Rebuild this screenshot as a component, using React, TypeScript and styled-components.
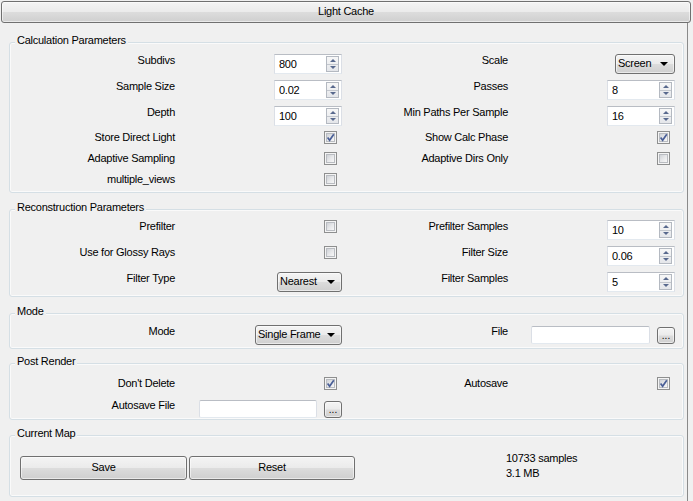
import React from 'react';
import styled, { createGlobalStyle, css } from 'styled-components';

const GlobalStyle = createGlobalStyle`
  html, body { margin: 0; padding: 0; background: #f0f0f0; }
  body {
    font-family: "Liberation Sans", Arial, sans-serif;
    font-size: 11px;
    letter-spacing: -0.25px;
    color: #000;
  }
  * { box-sizing: border-box; }
`;

const buttonFace = css`
  border: 1px solid #707070;
  border-radius: 3px;
  background: linear-gradient(to bottom, #f4f4f4 0%, #ebebeb 48%, #dcdcdc 52%, #cfcfcf 100%);
  box-shadow: inset 0 0 0 1px rgba(255, 255, 255, 0.55);
`;

const Window = styled.div`
  width: 693px;
  height: 501px;
  overflow: hidden;
  background: #f0f0f0;
  display: flex;
  flex-direction: column;
`;

const RolloutHeader = styled.div<{ $mt?: number }>`
  ${buttonFace};
  flex: none;
  width: 690px;
  height: 22px;
  margin: ${p => p.$mt ?? 1}px 2px 0 1px;
  display: flex;
  align-items: center;
  justify-content: center;
  padding-bottom: 1px;
  line-height: 13px;
`;

const Panel = styled.div`
  flex: none;
  width: 688px;
  padding: 0 3px 10px 9px;
  border-right: 1px solid #8a8a8a;
  display: flex;
  flex-direction: column;
`;

const GroupBox = styled.section<{ $mt: number; $pb: number }>`
  margin-top: ${p => p.$mt}px;
  padding: 0 8px ${p => p.$pb}px 0;
  border: 1px solid #d5dfe5;
  border-radius: 3px;
  box-shadow: inset 0 0 0 1px #fafafa;
`;

const GroupTitle = styled.div`
  width: fit-content;
  margin: -9px 0 0 5px;
  padding: 0 2px 1px;
  line-height: 13px;
  background: #f0f0f0;
`;

const FormRow = styled.div<{ $gap?: number }>`
  display: grid;
  grid-template-columns: 165px 167px 166px 167px;
  height: 21px;
  margin-top: ${p => p.$gap ?? 0}px;
  align-items: center;
`;

const Label = styled.div`
  text-align: right;
  white-space: nowrap;
  line-height: 13px;
  margin-bottom: 3px;
`;

const Cell = styled.div`
  display: flex;
  justify-content: flex-end;
  align-items: center;
  height: 100%;
  gap: 7px;
`;

const fieldBorder = css`
  background: #fff;
  border: 1px solid;
  border-color: #b9bdc4 #dbdfe6 #e3e9ef #dbdfe6;
`;

const SpinField = styled.div`
  ${fieldBorder};
  width: 68px;
  height: 20px;
  margin-top: 4px;
  display: flex;
  align-items: center;
`;

const SpinValue = styled.span`
  flex: 1;
  padding-left: 4px;
  line-height: 13px;
`;

const SpinButtons = styled.div`
  width: 13px;
  height: 16px;
  margin-right: 2px;
  border: 1px solid #b4b9c1;
  display: flex;
  flex-direction: column;
  background: linear-gradient(to bottom, #f7f7f7, #e4e6ea);
`;

const SpinHalf = styled.div<{ $down?: boolean }>`
  flex: 1;
  display: flex;
  align-items: center;
  justify-content: center;
  ${p => p.$down && css`border-top: 1px solid #c3c7ce;`}
`;

const Arrow = styled.span<{ $down?: boolean }>`
  width: 0;
  height: 0;
  border-left: 3px solid transparent;
  border-right: 3px solid transparent;
  ${p => p.$down
    ? css`border-top: 3px solid #58698d;`
    : css`border-bottom: 3px solid #58698d;`}
`;

const CheckBox = styled.span`
  width: 13px;
  height: 13px;
  margin: 0 5px 3px 0;
  border: 1px solid #8e8f8f;
  padding: 1px;
  background: #f4f4f4;
  display: flex;
`;

const CheckFill = styled.span`
  flex: 1;
  display: flex;
  background: linear-gradient(135deg, #cfd2d7 0%, #e6e7e9 50%, #f7f7f7 100%);
  border: 1px solid #b9bcc1;
`;

const CheckMark = styled.svg`
  width: 9px;
  height: 9px;
  margin: -1px;
`;

const Combo = styled.div<{ $w: number }>`
  ${buttonFace};
  width: ${p => p.$w}px;
  height: 20px;
  margin-top: 4px;
  display: flex;
  align-items: center;
  padding: 0 6px 1px 2px;
`;

const ComboText = styled.span`
  flex: 1;
  line-height: 13px;
  white-space: nowrap;
`;

const ComboArrow = styled.span`
  width: 0;
  height: 0;
  margin-top: 1px;
  border-left: 4px solid transparent;
  border-right: 4px solid transparent;
  border-top: 4px solid #000;
`;

const TextField = styled.div<{ $w: number }>`
  ${fieldBorder};
  border-radius: 2px;
  width: ${p => p.$w}px;
  height: 18px;
  margin-top: 4px;
`;

const DotsButton = styled.div`
  ${buttonFace};
  width: 18px;
  height: 17px;
  margin-top: 4px;
  display: flex;
  align-items: flex-end;
  justify-content: center;
  padding-bottom: 2px;
  font-size: 10px;
  line-height: 10px;
  letter-spacing: 0;
`;

const ActionRow = styled.div`
  display: flex;
  align-items: center;
  margin-top: 10px;
  padding-left: 10px;
`;

const ActionButton = styled.div<{ $w: number }>`
  ${buttonFace};
  width: ${p => p.$w}px;
  height: 24px;
  margin-right: 2px;
  display: flex;
  align-items: center;
  justify-content: center;
  padding-bottom: 1px;
  line-height: 13px;
`;

const Stats = styled.div`
  margin: 0 0 3px 149px;
  line-height: 15px;
`;

const Spin = ({ value }: { value: string }) => (
  <SpinField>
    <SpinValue>{value}</SpinValue>
    <SpinButtons>
      <SpinHalf><Arrow /></SpinHalf>
      <SpinHalf $down><Arrow $down /></SpinHalf>
    </SpinButtons>
  </SpinField>
);

const Check = ({ checked }: { checked?: boolean }) => (
  <CheckBox>
    <CheckFill>
      {checked && (
        <CheckMark viewBox="0 0 9 9">
          <path d="M1.6 4.6 L3.6 7.2 L7.8 1.2" fill="none" stroke="#4a5f97" strokeWidth="1.7" />
        </CheckMark>
      )}
    </CheckFill>
  </CheckBox>
);

const Dropdown = ({ text, w }: { text: string; w: number }) => (
  <Combo $w={w}>
    <ComboText>{text}</ComboText>
    <ComboArrow />
  </Combo>
);

const FilePick = ({ w }: { w: number }) => (
  <>
    <TextField $w={w} />
    <DotsButton>...</DotsButton>
  </>
);

export default function App() {
  return (
    <Window>
      <GlobalStyle />
      <RolloutHeader>Light Cache</RolloutHeader>
      <Panel>
        <GroupBox $mt={19} $pb={1}>
          <GroupTitle>Calculation Parameters</GroupTitle>
          <FormRow $gap={2}>
            <Label>Subdivs</Label>
            <Cell><Spin value="800" /></Cell>
            <Label>Scale</Label>
            <Cell><Dropdown text="Screen" w={60} /></Cell>
          </FormRow>
          <FormRow $gap={5}>
            <Label>Sample Size</Label>
            <Cell><Spin value="0.02" /></Cell>
            <Label>Passes</Label>
            <Cell><Spin value="8" /></Cell>
          </FormRow>
          <FormRow $gap={5}>
            <Label>Depth</Label>
            <Cell><Spin value="100" /></Cell>
            <Label>Min Paths Per Sample</Label>
            <Cell><Spin value="16" /></Cell>
          </FormRow>
          <FormRow $gap={5}>
            <Label>Store Direct Light</Label>
            <Cell><Check checked /></Cell>
            <Label>Show Calc Phase</Label>
            <Cell><Check checked /></Cell>
          </FormRow>
          <FormRow>
            <Label>Adaptive Sampling</Label>
            <Cell><Check /></Cell>
            <Label>Adaptive Dirs Only</Label>
            <Cell><Check /></Cell>
          </FormRow>
          <FormRow>
            <Label>multiple_views</Label>
            <Cell><Check /></Cell>
          </FormRow>
        </GroupBox>

        <GroupBox $mt={16} $pb={7}>
          <GroupTitle>Reconstruction Parameters</GroupTitle>
          <FormRow $gap={1}>
            <Label>Prefilter</Label>
            <Cell><Check /></Cell>
            <Label>Prefilter Samples</Label>
            <Cell><Spin value="10" /></Cell>
          </FormRow>
          <FormRow $gap={5}>
            <Label>Use for Glossy Rays</Label>
            <Cell><Check /></Cell>
            <Label>Filter Size</Label>
            <Cell><Spin value="0.06" /></Cell>
          </FormRow>
          <FormRow $gap={5}>
            <Label>Filter Type</Label>
            <Cell><Dropdown text="Nearest" w={65} /></Cell>
            <Label>Filter Samples</Label>
            <Cell><Spin value="5" /></Cell>
          </FormRow>
        </GroupBox>

        <GroupBox $mt={16} $pb={6}>
          <GroupTitle>Mode</GroupTitle>
          <FormRow $gap={2}>
            <Label>Mode</Label>
            <Cell><Dropdown text="Single Frame" w={87} /></Cell>
            <Label>File</Label>
            <Cell><FilePick w={119} /></Cell>
          </FormRow>
        </GroupBox>

        <GroupBox $mt={14} $pb={2}>
          <GroupTitle>Post Render</GroupTitle>
          <FormRow $gap={5}>
            <Label>Don't Delete</Label>
            <Cell><Check checked /></Cell>
            <Label>Autosave</Label>
            <Cell><Check checked /></Cell>
          </FormRow>
          <FormRow $gap={1}>
            <Label>Autosave File</Label>
            <Cell><FilePick w={118} /></Cell>
          </FormRow>
        </GroupBox>

        <GroupBox $mt={15} $pb={12}>
          <GroupTitle>Current Map</GroupTitle>
          <ActionRow>
            <ActionButton $w={167}>Save</ActionButton>
            <ActionButton $w={166}>Reset</ActionButton>
            <Stats>
              <div>10733 samples</div>
              <div>3.1 MB</div>
            </Stats>
          </ActionRow>
        </GroupBox>
      </Panel>
      <RolloutHeader $mt={0} />
    </Window>
  );
}
